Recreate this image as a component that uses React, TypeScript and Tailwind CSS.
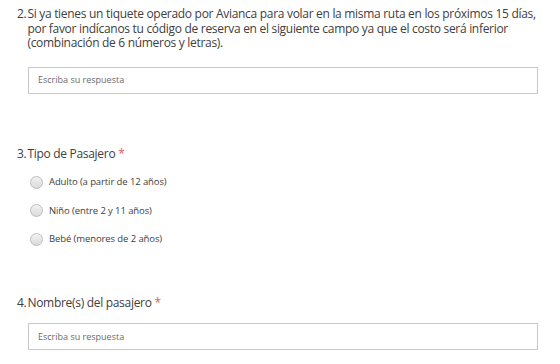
import React from "react";

const font = { fontFamily: '"Open Sans", "Noto Sans", sans-serif' };

function Radio({ label }: { label: string }) {
  return (
    <label className="flex h-[28.5px] items-center">
      <span className="ml-[30px] h-[13px] w-[13px] rounded-full border border-[#bdbdbd] bg-gradient-to-b from-[#f2f2f2] to-[#dadada]" />
      <span className="ml-[6px] text-[9.5px] tracking-[-0.1px] text-[#404040]">{label}</span>
    </label>
  );
}

function Answer() {
  return (
    <div className="ml-[28px] mr-[22px] flex h-[27px] items-center border border-[#c8c8c8] bg-white px-[9px]">
      <span className="text-[9px] text-[#6b6b6b]">Escriba su respuesta</span>
    </div>
  );
}

function Title({ n, children, required }: { n: string; children: React.ReactNode; required?: boolean }) {
  return (
    <div className="flex pl-[17px] text-[12px] leading-[14.5px] tracking-[-0.3px] text-[#404040]">
      <span className="shrink-0 pr-[1px]">{n}</span>
      <span>
        {children}
        {required && <span className="text-[#e05a5a]"> *</span>}
      </span>
    </div>
  );
}

export default function App() {
  return (
    <div className="h-[364px] w-[560px] overflow-hidden bg-white" style={font}>
      <div className="pt-[7px]">
        <Title n="2.">
          Si ya tienes un tiquete operado por Avianca para volar en la misma ruta en los próximos 15 días,
          <br />
          por favor indícanos tu código de reserva en el siguiente campo ya que el costo será inferior
          <br />
          (combinación de 6 números y letras).
        </Title>
      </div>
      <div className="mt-[16px]">
        <Answer />
      </div>
      <div className="mt-[53px]">
        <Title n="3." required>
          Tipo de Pasajero
        </Title>
      </div>
      <div className="mt-[7px]">
        <Radio label="Adulto (a partir de 12 años)" />
        <Radio label="Niño (entre 2 y 11 años)" />
        <Radio label="Bebé (menores de 2 años)" />
      </div>
      <div className="mt-[42px]">
        <Title n="4." required>
          Nombre(s) del pasajero
        </Title>
      </div>
      <div className="mt-[13px]">
        <Answer />
      </div>
    </div>
  );
}
